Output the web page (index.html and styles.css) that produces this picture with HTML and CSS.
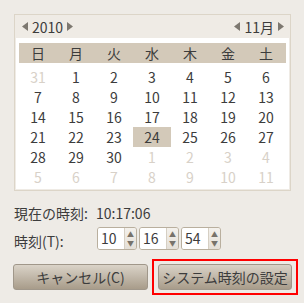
FILE: index.html
```html
<!DOCTYPE html>
<html lang="ja">
<head>
    <meta charset="UTF-8">
    <title>時刻の設定</title>
    <link rel="stylesheet" href="styles.css">
</head>
<body>

<div class="calendar">
    <div class="cal-head">
        <div class="nav">
            <svg class="arrow" width="6" height="9" viewBox="0 0 6 9"><polygon points="6,0 6,9 0,4.5"/></svg>
            <span class="nav-label">2010</span>
            <svg class="arrow" width="6" height="9" viewBox="0 0 6 9"><polygon points="0,0 0,9 6,4.5"/></svg>
        </div>
        <div class="nav">
            <svg class="arrow" width="6" height="9" viewBox="0 0 6 9"><polygon points="6,0 6,9 0,4.5"/></svg>
            <span class="nav-label">11月</span>
            <svg class="arrow" width="6" height="9" viewBox="0 0 6 9"><polygon points="0,0 0,9 6,4.5"/></svg>
        </div>
    </div>

    <div class="cal-body">
        <div class="weekdays">
            <span>日</span><span>月</span><span>火</span><span>水</span><span>木</span><span>金</span><span>土</span>
        </div>
        <div class="days" id="days"></div>
    </div>
</div>

<div class="time-info">
    <span class="label">現在の時刻:</span>
    <span class="value">10:17:06</span>
    <span class="label label-time">時刻(T):</span>
    <div class="spins">
        <div class="spin"><span class="spin-value">10</span><span class="spin-btns"><i>▲</i><i>▼</i></span></div>
        <div class="spin"><span class="spin-value">16</span><span class="spin-btns"><i>▲</i><i>▼</i></span></div>
        <div class="spin"><span class="spin-value">54</span><span class="spin-btns"><i>▲</i><i>▼</i></span></div>
    </div>
</div>

<div class="buttons">
    <button class="btn cancel-btn">キャンセル(C)</button>
    <div class="highlight">
        <button class="btn set-btn">システム時刻の設定</button>
    </div>
</div>

<script>
    const days = document.getElementById('days');
    const cells = [31];
    for (let d = 1; d <= 30; d++) cells.push(d);
    for (let d = 1; d <= 11; d++) cells.push(d);

    cells.forEach((day, i) => {
        const span = document.createElement('span');
        span.textContent = day;
        if (i === 0 || i > 30) span.className = 'other';
        if (i === 24) span.className = 'selected';
        days.appendChild(span);
    });
</script>
</body>
</html>
```

FILE: styles.css
```css
body {
    margin: 0;
    padding: 14px 15px 0 14px;
    background: #eeebe6;
    font-family: "Noto Sans CJK JP", "DejaVu Sans", sans-serif;
    font-size: 14px;
    color: #3c3c3c;
}

.calendar {
    width: 273px;
    border: 1px solid #dcd5c8;
    padding: 0 1px 1px;
    background: #efebe5;
}

.cal-head {
    height: 23px;
    display: flex;
    justify-content: space-between;
    align-items: center;
    padding: 0 5px 0 6px;
}

.nav {
    display: flex;
    align-items: center;
    line-height: 1;
}

.nav-label {
    padding: 0 4px 0 4px;
}

.arrow {
    fill: #7d7870;
}

.cal-body {
    background: white;
    padding: 5px 3px 2px;
}

.weekdays,
.days {
    display: grid;
    grid-template-columns: repeat(7, 38px);
    text-align: center;
}

.weekdays {
    background: #d3c9b9;
    margin-bottom: 4px;
}

.weekdays span,
.days span {
    height: 20px;
    line-height: 20px;
}

.days .other {
    color: #d8d1c8;
}

.days .selected {
    background: #d3c9b9;
}

.time-info {
    display: grid;
    grid-template-columns: 82px auto;
    row-gap: 5px;
    margin-top: 13px;
    align-items: center;
}

.label {
    line-height: 18px;
}

.value {
    line-height: 18px;
}

.label-time {
    padding-top: 5px;
}

.spins {
    display: flex;
    gap: 2px;
    margin-left: 1px;
}

.spin {
    display: flex;
    width: 38px;
    height: 21px;
    border: 1px solid #b9af9e;
    border-radius: 3px;
    overflow: hidden;
}

.spin-value {
    width: 23px;
    background: white;
    padding-left: 3px;
    line-height: 21px;
    border-right: 1px solid #d6cfc3;
}

.spin-btns {
    flex: 1;
    display: flex;
    flex-direction: column;
    justify-content: center;
    align-items: center;
    background: linear-gradient(#f4f1ec, #e4dfd7);
}

.spin-btns i {
    font-style: normal;
    font-size: 7px;
    line-height: 9px;
    color: #77726a;
}

.buttons {
    display: flex;
    align-items: center;
    gap: 4px;
    margin-top: 9px;
    margin-left: -1px;
    margin-right: -8px;
}

.btn {
    flex-shrink: 0;
    height: 26px;
    border: 1px solid #a0978a;
    border-radius: 3px;
    background: linear-gradient(#dad3c8, #a89c8a);
    font-family: "Noto Sans CJK JP", "DejaVu Sans", sans-serif;
    font-size: 14px;
    color: #3c3c3c;
    padding: 0;
}

.cancel-btn {
    width: 135px;
}

.highlight {
    flex-shrink: 0;
    border: 2px solid #ff0000;
    padding: 3px 4px;
}

.set-btn {
    width: 134px;
    display: block;
}
```
